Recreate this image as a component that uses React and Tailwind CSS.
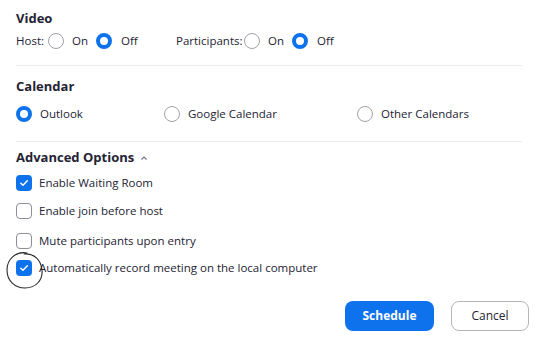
import React from "react";

const Radio = ({ on }) =>
  on ? (
    <span className="inline-block w-4 h-4 rounded-full border-[4px] border-[#0e72ed] bg-white shrink-0" />
  ) : (
    <span className="inline-block w-4 h-4 rounded-full border border-[#a1a1a9] bg-white shrink-0" />
  );

const Check = ({ on }) =>
  on ? (
    <span className="flex items-center justify-center w-4 h-4 rounded-[4px] bg-[#0e72ed] shrink-0">
      <svg width="10" height="10" viewBox="0 0 10 10" fill="none">
        <path d="M1.8 5.2 L4 7.3 L8.3 2.7" stroke="white" strokeWidth="1.4" strokeLinecap="round" strokeLinejoin="round" />
      </svg>
    </span>
  ) : (
    <span className="inline-block w-4 h-4 rounded-[4px] border border-[#8e8e96] bg-white shrink-0" />
  );

export default function App() {
  return (
    <div
      className="relative w-[538px] h-[342px] bg-white text-[#232333] text-[11.5px]"
      style={{ fontFamily: '"Open Sans", "Noto Sans", sans-serif' }}
    >
      <div className="pl-4 pr-4 pt-[8px]">
        <div className="font-bold text-[13px] h-[20px] leading-[20px]">Video</div>
        <div className="flex items-center h-[24px] mt-[1px]">
          <span className="w-[32px]">Host:</span>
          <Radio />
          <span className="ml-2 w-[24px]">On</span>
          <Radio on />
          <span className="ml-[9px] w-[55px]">Off</span>
          <span className="w-[68px]">Participants:</span>
          <Radio />
          <span className="ml-2 w-[24px]">On</span>
          <Radio on />
          <span className="ml-[9px]">Off</span>
        </div>
        <div className="h-px bg-[#ececf0] mt-[12px] mr-0" />
        <div className="font-bold text-[13px] h-[20px] leading-[20px] mt-[10px]">Calendar</div>
        <div className="flex items-center h-[24px] mt-[6px]">
          <div className="flex items-center w-[148px]">
            <Radio on />
            <span className="ml-2">Outlook</span>
          </div>
          <div className="flex items-center w-[193px]">
            <Radio />
            <span className="ml-2">Google Calendar</span>
          </div>
          <div className="flex items-center">
            <Radio />
            <span className="ml-2">Other Calendars</span>
          </div>
        </div>
        <div className="h-px bg-[#ececf0] mt-[15px]" />
        <div className="flex items-center h-[20px] mt-[6px]">
          <span className="font-bold text-[13px]">Advanced Options</span>
          <svg className="ml-[6px]" width="8" height="6" viewBox="0 0 8 6" fill="none">
            <path d="M1.5 4.5 L4 2 L6.5 4.5" stroke="#747487" strokeWidth="1.2" />
          </svg>
        </div>
        <div className="flex flex-col mt-[1px]">
          <div className="flex items-center h-[28px]">
            <Check on />
            <span className="ml-[7px]">Enable Waiting Room</span>
          </div>
          <div className="flex items-center h-[28px]">
            <Check />
            <span className="ml-[7px]">Enable join before host</span>
          </div>
          <div className="flex items-center h-[29px] pt-[2px]">
            <Check />
            <span className="ml-[7px]">Mute participants upon entry</span>
          </div>
          <div className="flex items-center h-[28px]">
            <Check on />
            <span className="ml-[7px]">Automatically record meeting on the local computer</span>
          </div>
        </div>
        <div className="flex justify-end gap-[17px] mt-[19px] mr-[-7px]">
          <button className="w-[89px] h-[30px] rounded-[8px] bg-[#0e72ed] text-white font-bold text-[12px]">
            Schedule
          </button>
          <button className="w-[78px] h-[30px] rounded-[8px] border border-[#b4b4bc] bg-white text-[#232333] text-[12px]">
            Cancel
          </button>
        </div>
      </div>
      <svg className="absolute left-[3px] top-[249px]" width="44" height="42" viewBox="0 0 44 42" fill="none">
        <path
          d="M24 4 C13 2 4 10 4 21 C4 32 12 39 22 39 C33 39 40 31 39 21 C38 11 31 4 21 5"
          stroke="#2a2a2a"
          strokeWidth="1.1"
          strokeLinecap="round"
        />
      </svg>
    </div>
  );
}
